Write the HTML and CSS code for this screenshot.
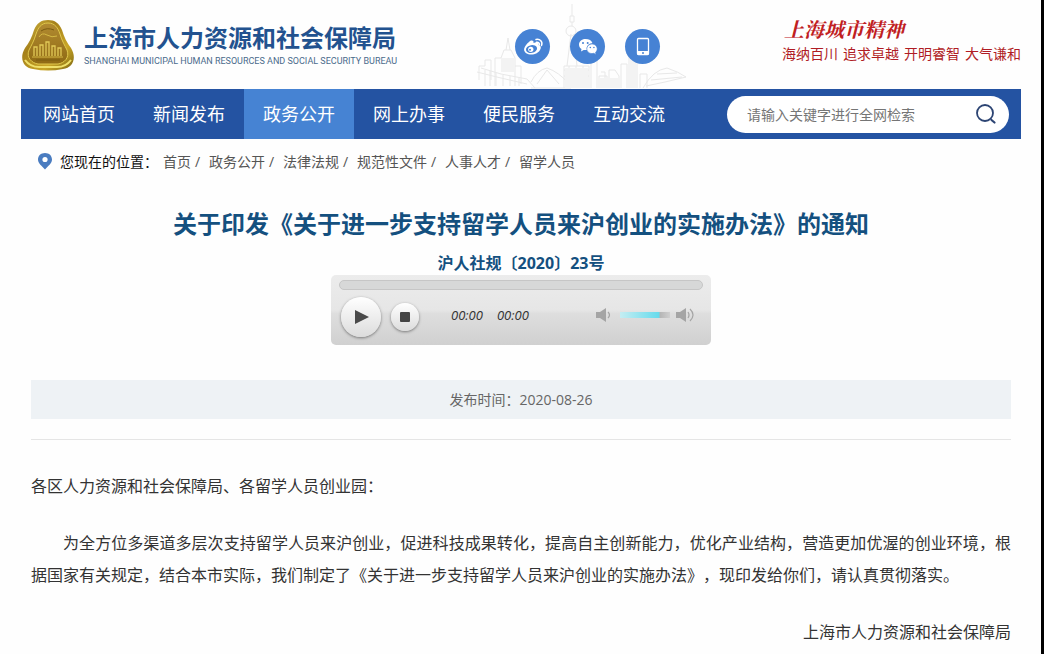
FILE: index.html
```
<!DOCTYPE html>
<html lang="zh-CN">
<head>
    <meta charset="UTF-8">
    <meta name="viewport" content="width=device-width, initial-scale=1.0">
    <title>上海市人力资源和社会保障局</title>
    <link rel="stylesheet" href="styles.css">
</head>
<body>
    <div class="container">
        <header class="header">
            <a class="logo" href="#">
                <svg class="emblem" viewBox="0 0 54 52" aria-hidden="true">
                    <defs>
                        <linearGradient id="gold" x1="0" y1="0" x2="1" y2="1">
                            <stop offset="0" stop-color="#d8c04a"/>
                            <stop offset="0.35" stop-color="#a5801a"/>
                            <stop offset="0.7" stop-color="#c9a627"/>
                            <stop offset="1" stop-color="#7c6512"/>
                        </linearGradient>
                        <linearGradient id="bronze" x1="0" y1="0" x2="0" y2="1">
                            <stop offset="0" stop-color="#b28b31"/>
                            <stop offset="1" stop-color="#8f6a14"/>
                        </linearGradient>
                    </defs>
                    <path d="M27 1C34 1 38 4 41 11C43 18 46 24 50 29C56 39 52 49 42 50C32 52 22 52 12 50C2 49-2 39 4 29C8 24 11 18 13 11C16 4 20 1 27 1Z" fill="url(#gold)"/>
                    <path d="M27 4C34 4 37 9 39 15C41 22 44 27 46 31C49 39 43 44 37 45H17C11 44 5 39 8 31C10 27 13 22 15 15C17 9 20 4 27 4Z" fill="url(#bronze)" stroke="#e0c84e" stroke-width="1"/>
                    <path d="M4 41Q9 48 18 48H36Q45 48 50 41" fill="none" stroke="#efe06a" stroke-width="2"/>
                    <path d="M13 37V28H16V37M19 37V26H22V37M25 37V23H28V37M31 37V27H34V37M37 37V29H40V37" fill="none" stroke="#e2ca58" stroke-width="1.3"/>
                    <path d="M11 38H42M18 18Q21 13 26 16T36 17" fill="none" stroke="#d5b945"/>
                    <path d="M15 41H39M20 12Q26 8 33 11" fill="none" stroke="#7b5c11"/>
                </svg>
                <span class="logo-text">
                    <strong class="logo-name">上海市人力资源和社会保障局</strong>
                    <span class="logo-en">SHANGHAI MUNICIPAL HUMAN RESOURCES AND SOCIAL SECURITY BUREAU</span>
                </span>
            </a>
            <div class="social">
                <svg class="skyline" viewBox="0 0 210 89" aria-hidden="true">
                    <g fill="none" stroke="#e8e8e8">
                        <path d="M2 80V66H8V60H14V80M18 86V58H24L27 50H34L38 58V86M29 50L31 38L33 50M38 66H44V84M4 68L24 74L50 79L58 88M0 72L24 78L50 84M8 70V86M13 71V86M19 73V86M26 75V86M33 76V86M42 78V86"/>
                        <path d="M54 82Q60 70 70 68Q82 72 92 84M60 84L70 70L82 84M54 88H94"/>
                        <path d="M95 4V16M93 16H97V22H93ZM95 22V26M94 34L90 66M97 34L100 66M87 88V66H112V88M92 66V88M99 66V88M106 66V88M87 70H112M87 76H112"/>
                        <circle cx="94" cy="31" r="5"/>
                        <path d="M114 88V58H120V88M122 88V76H130V88M124 72H128V88M132 88V70H138L142 76V88M144 88V64H150V88M152 88V52H156L158 32L160 52V88M163 88V74H170V88"/>
                        <path d="M166 88Q176 70 190 68Q202 72 209 77L188 82L169 86M174 80L205 77M180 74L200 73"/>
                    </g>
                    <path d="M88 68H111V88H88ZM122 78H142V88H122ZM152 56H160V88H152ZM24 58H37V72H24Z" fill="#f3f3f3"/>
                </svg>
                <a class="social-link" href="#" aria-label="微博">
                    <svg viewBox="0 0 35 35">
                        <path d="M14 13C16 11 19 11 18.500 14C22 12.500 24.500 13.500 23.500 16C26 16.800 26.200 18 25.500 20C24 24 19 26 15 25.500C11 25 8.500 22.500 9.200 19.500C9.800 17 12 14.500 14 13Z" fill="#fff"/>
                        <ellipse cx="16.500" cy="20" rx="5.600" ry="3.900" fill="#4682d4" transform="rotate(-10 16.500 20)"/>
                        <circle cx="15.800" cy="20.300" r="2.600" fill="#fff"/>
                        <circle cx="15" cy="20.800" r="1" fill="#4682d4"/>
                        <path d="M21 10.500C25 9.500 28 13 26.500 16.500M21.500 13.300C23.500 13 25 14.500 24.300 16" fill="none" stroke="#fff" stroke-width="1.500" stroke-linecap="round"/>
                    </svg>
                </a>
                <a class="social-link" href="#" aria-label="微信">
                    <svg viewBox="0 0 35 35">
                        <path d="M15.500 10C11.500 10 9 12.500 9 15.500C9 17.500 10 19 11.500 20L11 22.500L13.700 21H17C16 17 19 14 22.500 14.200C21.800 11.500 19 10 15.500 10Z" fill="#fff"/>
                        <path d="M22 15C19 15 16.800 17.200 16.800 19.800C16.800 22.500 19 24.600 22 24.600L23.800 24.300L26 25.500L25.500 23.400C26.600 22.500 27.200 21.300 27.200 19.800C27.200 17.200 25 15 22 15Z" fill="#fff" stroke="#4682d4" stroke-width="0.600"/>
                        <g fill="#4682d4"><circle cx="13" cy="14" r="1"/><circle cx="17.700" cy="14" r="1"/><circle cx="20.300" cy="18.500" r="0.800"/><circle cx="23.900" cy="18.500" r="0.800"/></g>
                    </svg>
                </a>
                <a class="social-link" href="#" aria-label="手机版">
                    <svg viewBox="0 0 35 35">
                        <rect x="12.500" y="9.500" width="11" height="16" rx="1" fill="none" stroke="#fff" stroke-width="1.300"/>
                        <path d="M12 22H24V25.500H12Z" fill="#fff"/>
                        <circle cx="18" cy="24" r="1" fill="#4682d4"/>
                    </svg>
                </a>
            </div>
            <div class="spirit">
                <strong class="spirit-title">上海城市精神</strong>
                <div class="spirit-words">
                    <span>海纳百川</span>
                    <span>追求卓越</span>
                    <span>开明睿智</span>
                    <span>大气谦和</span>
                </div>
            </div>
        </header>

        <nav class="nav">
            <a class="nav-item" href="#">网站首页</a>
            <a class="nav-item" href="#">新闻发布</a>
            <a class="nav-item active" href="#">政务公开</a>
            <a class="nav-item" href="#">网上办事</a>
            <a class="nav-item" href="#">便民服务</a>
            <a class="nav-item" href="#">互动交流</a>
            <form class="search">
                <input class="search-input" type="text" placeholder="请输入关键字进行全网检索" aria-label="全网检索">
                <button class="search-btn" type="button" aria-label="搜索">
                    <svg viewBox="0 0 22 22">
                        <circle cx="10" cy="10" r="8" fill="none" stroke="#2c4473" stroke-width="1.800"/>
                        <path d="M16.500 17L19.500 19.500" stroke="#2c4473" stroke-width="2.200" stroke-linecap="round"/>
                    </svg>
                </button>
            </form>
        </nav>

        <div class="crumbs">
            <svg class="pin" viewBox="0 0 16 18" aria-hidden="true">
                <path d="M8 1C3.800 1 1 3.800 1 7.500C1 11.500 5 14 8 17.500C11 14 15 11.500 15 7.500C15 3.800 12.200 1 8 1Z" fill="#4a7cc0"/>
                <circle cx="8" cy="7.500" r="2.600" fill="#fff"/>
            </svg>
            <span class="crumbs-label">您现在的位置：</span>
            <a href="#">首页</a><i>/</i>
            <a href="#">政务公开</a><i>/</i>
            <a href="#">法律法规</a><i>/</i>
            <a href="#">规范性文件</a><i>/</i>
            <a href="#">人事人才</a><i>/</i>
            <a href="#">留学人员</a>
        </div>

        <main class="article">
            <h1 class="title">关于印发《关于进一步支持留学人员来沪创业的实施办法》的通知</h1>
            <h2 class="doc-no">沪人社规〔2020〕23号</h2>

            <div class="player">
                <div class="progress"></div>
                <div class="controls">
                    <button class="round play" type="button" aria-label="播放">
                        <svg viewBox="0 0 14 16"><path d="M0 1L14 8L0 15Z" fill="#4a4a4a"/></svg>
                    </button>
                    <button class="round stop" type="button" aria-label="停止">
                        <svg viewBox="0 0 12 12"><rect x="1" y="1" width="10" height="10" rx="1" fill="#444"/></svg>
                    </button>
                    <div class="times"><span>00:00</span><span>00:00</span></div>
                    <div class="volume">
                        <button class="vol-btn" type="button" aria-label="静音">
                            <svg viewBox="0 0 20 16"><path d="M1 5H5L11 1V15L5 11H1Z" fill="#a5a5a5"/><path d="M13 5Q16 8 13 11" fill="none" stroke="#a5a5a5" stroke-width="1.200"/></svg>
                        </button>
                        <input class="vol-range" type="range" min="0" max="100" value="80" aria-label="音量">
                        <button class="vol-btn" type="button" aria-label="最大音量">
                            <svg viewBox="0 0 20 16"><path d="M1 5H5L11 1V15L5 11H1Z" fill="#a5a5a5"/><path d="M13 5Q15 8 13 11M15 2Q21 8 15 14" fill="none" stroke="#a5a5a5" stroke-width="1.200"/></svg>
                        </button>
                    </div>
                </div>
            </div>

            <div class="meta">发布时间：2020-08-26</div>

            <div class="content">
                <p>各区人力资源和社会保障局、各留学人员创业园：</p>
                <p class="indent">为全方位多渠道多层次支持留学人员来沪创业，促进科技成果转化，提高自主创新能力，优化产业结构，营造更加优渥的创业环境，根据国家有关规定，结合本市实际，我们制定了《关于进一步支持留学人员来沪创业的实施办法》，现印发给你们，请认真贯彻落实。</p>
                <p class="sign">上海市人力资源和社会保障局</p>
            </div>
        </main>
    </div>
</body>
</html>
```
FILE: styles.css
```
* {
    margin: 0;
    padding: 0;
    box-sizing: border-box;
}
body {
    font-family: "Open Sans", "Noto Sans CJK SC", sans-serif;
    font-size: 14px;
    color: #333;
    background: #fefefe;
    border-right: 3px solid #000;
    min-height: 100vh;
    text-spacing-trim: space-all;
}
a {
    color: inherit;
    text-decoration: none;
}
button {
    border: none;
    background: none;
    cursor: pointer;
}
svg {
    display: block;
}
.container {
    margin: 0 20px 0 21px;
}

/* 页头 */
.header {
    display: flex;
    justify-content: space-between;
    height: 89px;
}
.logo {
    display: flex;
    align-items: center;
    gap: 9px;
}
.emblem {
    width: 54px;
    height: 52px;
}
.logo-text {
    display: flex;
    flex-direction: column;
}
.logo-name {
    font-size: 24px;
    line-height: 32px;
    color: #22528f;
}
.logo-en {
    font-family: Roboto, "Liberation Sans", sans-serif;
    font-size: 9px;
    line-height: 14px;
    color: #4a6b8c;
    white-space: nowrap;
}
.social {
    position: relative;
    display: flex;
    align-items: center;
    gap: 20px;
    width: 225px;
    padding: 4px 0 0 38px;
}
.skyline {
    position: absolute;
    left: 0;
    bottom: 0;
    width: 210px;
    height: 89px;
}
.social-link {
    position: relative;
    width: 35px;
    height: 35px;
    border-radius: 50%;
    background: #4682d4;
}
.spirit {
    padding-top: 16px;
    color: #b01c24;
}
.spirit-title {
    display: block;
    padding-left: 2px;
    font-family: "Noto Serif CJK SC", "Noto Sans CJK SC", serif;
    font-size: 20px;
    font-style: italic;
    line-height: 26px;
    color: #c0201f;
}
.spirit-words {
    display: flex;
    gap: 5px;
    line-height: 24px;
}

/* 导航 */
.nav {
    display: flex;
    align-items: center;
    height: 50px;
    padding: 0 12px 0 3px;
    background: #2453a2;
}
.nav-item {
    padding: 0 19px;
    font-size: 18px;
    line-height: 50px;
    color: #fff;
    white-space: nowrap;
}
.nav-item.active {
    background: #4683d3;
}
.search {
    display: flex;
    align-items: center;
    width: 282px;
    height: 37px;
    margin-left: auto;
    padding: 0 12px 0 20px;
    border-radius: 19px;
    background: #fff;
}
.search-input {
    flex: 1;
    min-width: 0;
    border: none;
    outline: none;
    font: inherit;
    background: none;
}
.search-input::placeholder {
    color: #757575;
}
.search-btn {
    width: 22px;
    height: 22px;
}

/* 当前位置 */
.crumbs {
    display: flex;
    align-items: center;
    height: 44px;
    padding-left: 16px;
    color: #555;
}
.pin {
    width: 16px;
    height: 18px;
    margin-right: 7px;
}
.crumbs-label {
    margin-right: 5px;
    color: #111;
}
.crumbs i {
    width: 18px;
    padding-left: 4px;
    font-style: normal;
}

/* 正文 */
.article {
    padding: 22px 10px 0;
}
.title {
    font-size: 24px;
    line-height: 38px;
    text-align: center;
    color: #14507f;
}
.doc-no {
    font-size: 16px;
    line-height: 32px;
    padding-top: 4px;
    text-align: center;
    color: #14507f;
}
.player {
    width: 380px;
    height: 70px;
    margin: -4px auto 0;
    padding: 5px 8px;
    border-radius: 5px;
    background: linear-gradient(#ececec, #e6e6e6 50%, #dedede 55%, #d0d0d0);
}
.progress {
    height: 10px;
    border: 1px solid #c6c6c6;
    border-radius: 5px;
    background: #d7d8d8;
}
.controls {
    display: flex;
    align-items: center;
    height: 54px;
}
.round {
    display: flex;
    align-items: center;
    justify-content: center;
    border-radius: 50%;
    background: linear-gradient(#fff, #dcdcdc);
    box-shadow: 0 1px 3px #777;
}
.play {
    width: 40px;
    height: 40px;
    margin-left: 2px;
}
.play svg {
    width: 14px;
    height: 16px;
    margin-left: 2px;
}
.stop {
    width: 28px;
    height: 28px;
    margin-left: 10px;
}
.stop svg {
    width: 12px;
    height: 12px;
}
.times {
    display: flex;
    gap: 14px;
    margin-left: 32px;
    padding-bottom: 4px;
    font-size: 13px;
    font-style: italic;
}
.volume {
    display: flex;
    align-items: center;
    gap: 5px;
    margin-left: auto;
    padding: 0 8px 4px 0;
}
.vol-btn svg {
    width: 20px;
    height: 16px;
}
.vol-range {
    appearance: none;
    width: 50px;
    height: 6px;
    background: linear-gradient(90deg, #c5edf2, #66dbec 78%, #b5b5b5 80%, #cfcfcf);
}
.vol-range::-webkit-slider-thumb {
    appearance: none;
    width: 1px;
    height: 6px;
}
.meta {
    margin-top: 35px;
    line-height: 39px;
    text-align: center;
    color: #666;
    background: #eef2f5;
}
.content {
    margin-top: 20px;
    padding-top: 30px;
    border-top: 1px solid #e5e5e5;
    font-size: 16px;
    line-height: 32px;
}
.content p {
    margin-bottom: 25px;
    text-align: justify;
}
.content .indent {
    text-indent: 2em;
}
.content .sign {
    margin-bottom: 0;
    text-align: right;
}
```
